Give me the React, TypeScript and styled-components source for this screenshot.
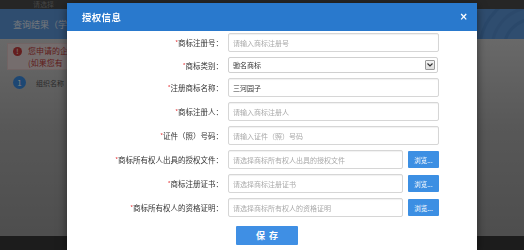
import React from "react";
import styled, { createGlobalStyle } from "styled-components";

const GlobalStyle = createGlobalStyle`
  html, body {
    margin: 0;
    padding: 0;
    overflow: hidden;
  }
  body {
    font-family: "Noto Sans CJK SC", "Noto Sans", sans-serif;
    background: #383838;
  }
`;

const Page = styled.div`
  width: 524px;
  height: 250px;
  display: flex;
  flex-direction: column;
`;

const TopStrip = styled.div`
  height: 9px;
  background: #4c4c4c;
  color: #8a8a8a;
  font-size: 7px;
  line-height: 9px;
  padding-left: 33px;
  overflow: hidden;
`;

const ResultBar = styled.div`
  height: 30px;
  background: #5e9ade;
  display: flex;
  align-items: center;
  padding-left: 13px;
  color: #e6eef8;
  font-size: 9px;
  overflow: hidden;
`;

const BarDeco = styled.svg`
  margin-left: auto;
  flex: none;
`;

const Content = styled.div`
  flex: 1;
  background: linear-gradient(180deg, #d2d2d2 0%, #b0b0b0 45%, #9c9c9c 100%);
  padding: 4px 0 0 7px;
  display: flex;
  flex-direction: column;
  gap: 6px;
`;

const AlertBox = styled.div`
  width: 200px;
  height: 27px;
  box-sizing: border-box;
  background: #eadada;
  border: 1px solid #e2c8c8;
  padding: 1px 0 0 5px;
  display: grid;
  grid-template-columns: 12px auto;
  justify-content: start;
  column-gap: 3px;
  color: #c03a3a;
  font-size: 8px;
  line-height: 12px;
`;

const AlertIcon = styled.span`
  width: 9px;
  height: 9px;
  border-radius: 50%;
  background: #c93c3c;
  color: #fff;
  font-size: 7px;
  line-height: 9px;
  text-align: center;
  margin-top: 2px;
`;

const StepRow = styled.div`
  display: flex;
  align-items: center;
  gap: 10px;
  padding-left: 6px;
  color: #555;
  font-size: 7px;
`;

const StepDot = styled.span`
  width: 13px;
  height: 13px;
  border-radius: 50%;
  background: #3b8ee6;
  color: #fff;
  font-size: 8px;
  line-height: 13px;
  text-align: center;
`;

const Footer = styled.div`
  height: 14px;
  background: #383838;
`;

const Overlay = styled.div`
  position: fixed;
  inset: 0;
  background: rgba(0, 0, 0, 0.5);
`;

const Modal = styled.div`
  position: absolute;
  left: 67px;
  top: 3px;
  width: 410px;
  height: 247px;
  background: #fff;
  box-shadow: 0 3px 9px rgba(0, 0, 0, 0.5);
  display: flex;
  flex-direction: column;
`;

const ModalHeader = styled.div`
  height: 28px;
  background: #2979cd;
  display: flex;
  align-items: center;
  justify-content: space-between;
  padding: 0 9px 0 15px;
  color: #fff;
`;

const Title = styled.span`
  font-size: 9.5px;
  font-weight: 700;
  letter-spacing: 0.3px;
`;

const Close = styled.span`
  font-family: "DejaVu Sans", sans-serif;
  font-size: 10px;
  font-weight: 700;
  line-height: 1;
`;

const Form = styled.div`
  display: grid;
  grid-template-columns: 156px 211px;
  column-gap: 5px;
  row-gap: 5px;
  padding-top: 2px;
  align-items: center;
`;

const Label = styled.label`
  text-align: right;
  font-size: 7.5px;
  color: #333;
  white-space: nowrap;
`;

const Star = styled.span`
  color: #e4393c;
  font-size: 6px;
  vertical-align: 1px;
`;

const Field = styled.div`
  display: flex;
  gap: 5px;
  align-items: center;
`;

const TextInput = styled.input`
  flex: 1;
  min-width: 0;
  height: 19px;
  box-sizing: border-box;
  border: 1px solid #d6d6d6;
  border-radius: 2px;
  box-shadow: inset 0 1px 1px rgba(0, 0, 0, 0.06);
  padding: 0 4px;
  font-family: "Noto Sans CJK SC", sans-serif;
  font-size: 7px;
  color: #333;
  outline: none;
  &::placeholder {
    color: #aaa;
  }
`;

const SelectBox = styled.div`
  width: 210px;
  height: 16px;
  box-sizing: border-box;
  border: 1px solid #d0d0d0;
  border-radius: 2px;
  display: flex;
  align-items: center;
  justify-content: space-between;
  padding: 0 2px 0 4px;
  font-size: 7px;
  color: #333;
`;

const SelectArrow = styled.span`
  width: 10px;
  height: 10px;
  box-sizing: border-box;
  border: 1px solid #999;
  border-radius: 1px;
  background: linear-gradient(#f4f4f4, #dcdcdc);
  display: flex;
  align-items: center;
  justify-content: center;
`;

const BrowseButton = styled.button`
  width: 31px;
  height: 17px;
  border: none;
  border-radius: 1px;
  background: #3c8fe3;
  color: #fff;
  font-family: "Noto Sans CJK SC", sans-serif;
  font-size: 6.5px;
  padding: 0;
`;

const SaveButton = styled.button`
  grid-column: 2;
  justify-self: start;
  margin: 4px 0 0 8px;
  width: 62px;
  height: 19px;
  border: none;
  border-radius: 1px;
  background: #3f8fe4;
  color: #fff;
  font-family: "Noto Sans CJK SC", sans-serif;
  font-size: 9px;
  font-weight: 700;
  letter-spacing: 4px;
  padding: 0 0 0 4px;
`;

type Row = {
  label: string;
  placeholder?: string;
  value?: string;
  file?: boolean;
};

const rows: Row[] = [
  { label: "商标注册号", placeholder: "请输入商标注册号" },
  { label: "注册商标名称", value: "三河园子" },
  { label: "商标注册人", placeholder: "请输入商标注册人" },
  { label: "证件（照）号码", placeholder: "请输入证件（照）号码" },
  {
    label: "商标所有权人出具的授权文件",
    placeholder: "请选择商标所有权人出具的授权文件",
    file: true,
  },
  { label: "商标注册证书", placeholder: "请选择商标注册证书", file: true },
  {
    label: "商标所有权人的资格证明",
    placeholder: "请选择商标所有权人的资格证明",
    file: true,
  },
];

const FormRow = ({ label, placeholder, value, file }: Row) => (
  <>
    <Label>
      <Star>*</Star>
      {label}：
    </Label>
    <Field>
      <TextInput placeholder={placeholder} defaultValue={value} readOnly />
      {file && <BrowseButton>浏览...</BrowseButton>}
    </Field>
  </>
);

export default function App() {
  return (
    <>
      <GlobalStyle />
      <Page>
        <TopStrip>请选择</TopStrip>
        <ResultBar>
          <span>查询结果（学</span>
          <BarDeco width="60" height="30" viewBox="0 0 60 30">
            <circle cx="70" cy="40" r="30" fill="none" stroke="#5490d4" strokeWidth="3" />
            <circle cx="70" cy="40" r="42" fill="none" stroke="#5893d6" strokeWidth="3" />
            <circle cx="70" cy="40" r="54" fill="none" stroke="#5490d4" strokeWidth="3" />
          </BarDeco>
        </ResultBar>
        <Content>
          <AlertBox>
            <AlertIcon>!</AlertIcon>
            <span>您申请的企</span>
            <span />
            <span>(如果您有</span>
          </AlertBox>
          <StepRow>
            <StepDot>1</StepDot>
            <span>组织名称</span>
          </StepRow>
        </Content>
        <Footer />
      </Page>
      <Overlay />
      <Modal>
        <ModalHeader>
          <Title>授权信息</Title>
          <Close>×</Close>
        </ModalHeader>
        <Form>
          <FormRow {...rows[0]} />
          <Label>
            <Star>*</Star>商标类别：
          </Label>
          <Field>
            <SelectBox>
              <span>驰名商标</span>
              <SelectArrow>
                <svg width="6" height="4" viewBox="0 0 6 4">
                  <path d="M0.5 0.5 L3 3 L5.5 0.5" fill="none" stroke="#333" strokeWidth="1.2" />
                </svg>
              </SelectArrow>
            </SelectBox>
          </Field>
          {rows.slice(1).map((r) => (
            <FormRow key={r.label} {...r} />
          ))}
          <SaveButton>保存</SaveButton>
        </Form>
      </Modal>
    </>
  );
}
